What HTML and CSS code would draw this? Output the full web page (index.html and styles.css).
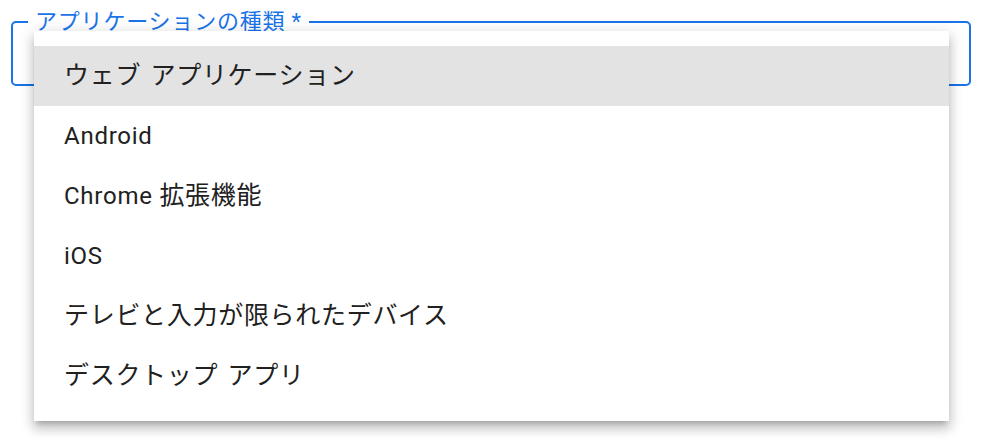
FILE: index.html
```html
<!DOCTYPE html>
<html lang="ja">
<head>
<meta charset="utf-8">
<title>アプリケーションの種類</title>
<link rel="stylesheet" href="styles.css">
</head>
<body>
<div class="page">
  <fieldset class="field">
    <legend class="field-label">アプリケーションの種類 *</legend>
    <div class="field-body"></div>
  </fieldset>
  <ul class="menu" role="listbox">
    <li class="menu-item is-active" role="option"><span class="menu-text"><span class="ja">ウェブ アプリケーション</span></span></li>
    <li class="menu-item" role="option"><span class="menu-text">Android</span></li>
    <li class="menu-item" role="option"><span class="menu-text">Chrome <span class="ja">拡張機能</span></span></li>
    <li class="menu-item" role="option"><span class="menu-text">iOS</span></li>
    <li class="menu-item" role="option"><span class="menu-text"><span class="ja">テレビと入力が限られたデバイス</span></span></li>
    <li class="menu-item" role="option"><span class="menu-text"><span class="ja">デスクトップ アプリ</span></span></li>
  </ul>
</div>
</body>
</html>
```

FILE: styles.css
```css
html, body {
  margin: 0;
  padding: 0;
  background: #ffffff;
}

body {
  font-family: Roboto, "Noto Sans CJK JP", sans-serif;
  color: #212121;
}

.page {
  position: relative;
  width: 981px;
  height: 440px;
  padding: 10px 10px 0 11px;
  box-sizing: border-box;
}

.field {
  margin: 0;
  padding: 0 15px;
  border: 2px solid #1a73e8;
  border-radius: 5px;
}

.field-label {
  padding: 0 7px;
  font-size: 22px;
  line-height: 24px;
  letter-spacing: 0.8px;
  color: #1a73e8;
}

.field-body {
  height: 50px;
}

.menu {
  position: absolute;
  left: 34px;
  top: 31px;
  width: 915px;
  margin: 0;
  padding: 15px 0;
  list-style: none;
  background: #ffffff;
  box-shadow: 0 5px 5px -3px rgba(0, 0, 0, 0.2),
              0 8px 10px 1px rgba(0, 0, 0, 0.14),
              0 3px 14px 2px rgba(0, 0, 0, 0.12);
}

.menu-item {
  display: flex;
  align-items: center;
  height: 60px;
  padding: 0 30px;
  font-size: 24px;
  line-height: 30px;
  letter-spacing: 0.75px;
  color: #212121;
}

.menu-text {
  white-space: pre;
}

.menu-item .ja {
  font-size: 25px;
  letter-spacing: 0.7px;
  word-spacing: 2.5px;
}

.menu-item.is-active {
  background: #e3e3e3;
}
```
